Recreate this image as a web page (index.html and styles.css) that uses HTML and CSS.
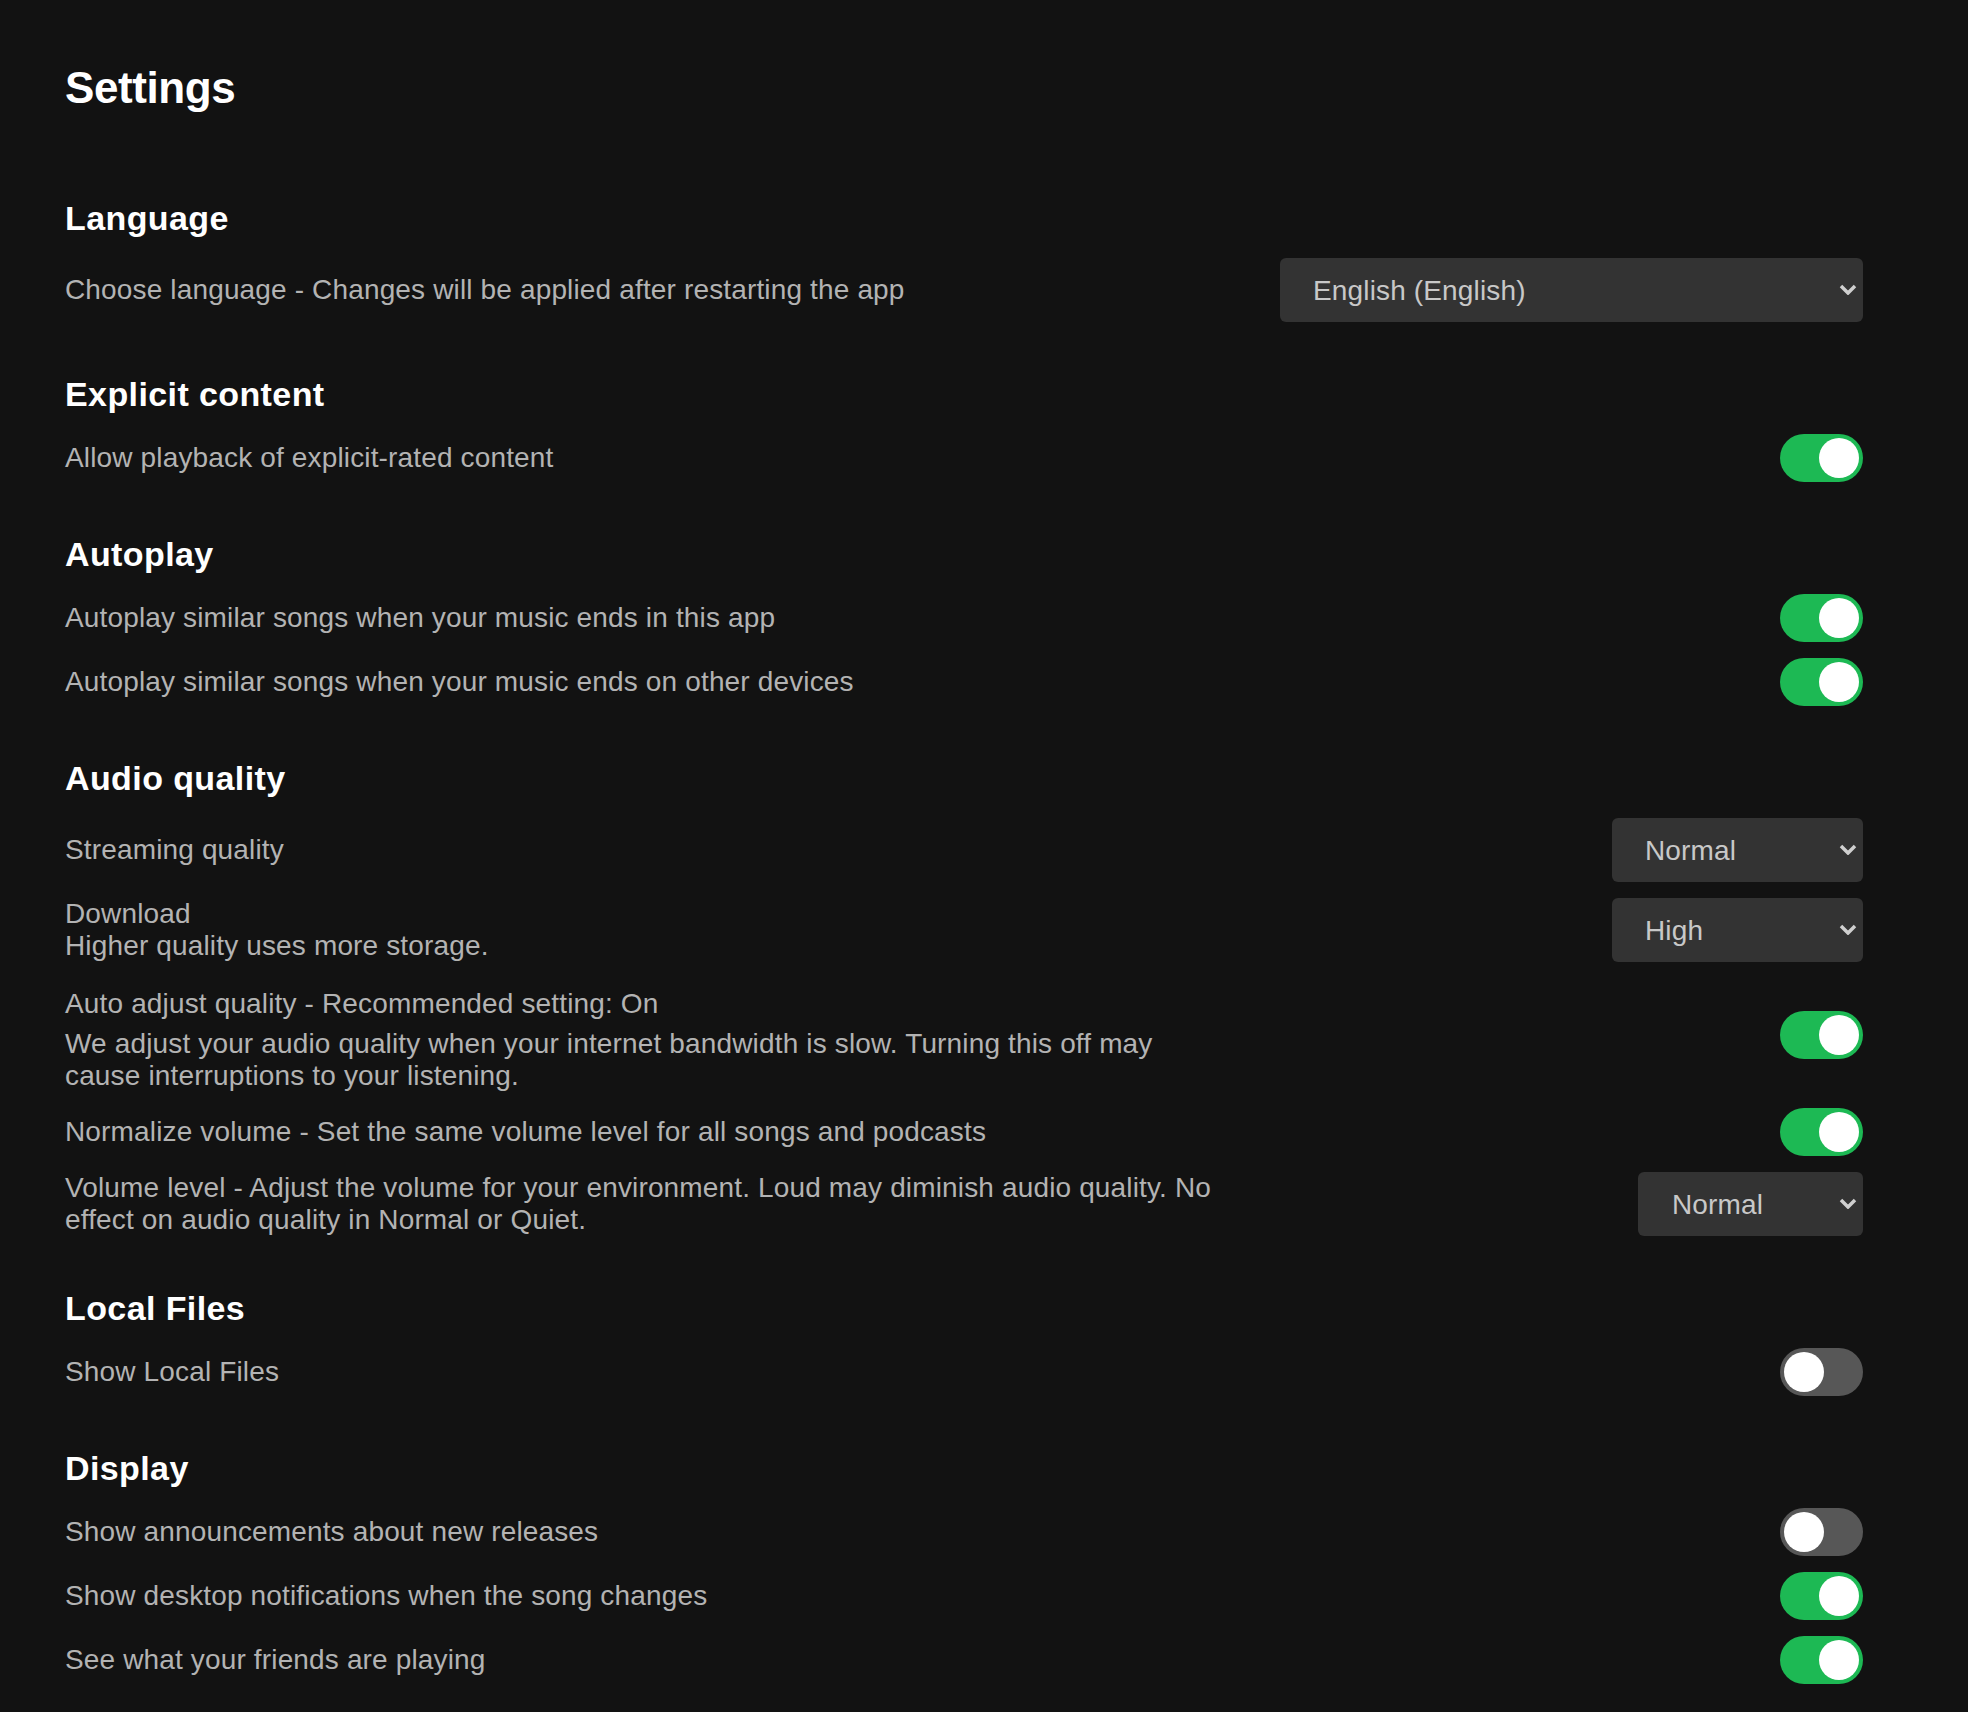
FILE: index.html
```
<!DOCTYPE html>
<html lang="en">
<head>
    <meta charset="UTF-8">
    <meta name="viewport" content="width=device-width, initial-scale=1.0">
    <title>Settings</title>
    <link rel="stylesheet" href="styles.css">
</head>
<body>
    <main class="settings">
        <h1>Settings</h1>

        <section class="group">
            <h2>Language</h2>
            <div class="row">
                <label class="row-label" for="language">Choose language - Changes will be applied after restarting the app</label>
                <div class="select-wrap">
                    <select id="language" class="select select-lang">
                        <option>English (English)</option>
                    </select>
                    <svg class="chevron" viewBox="0 0 18 11"><path d="M2 2l7 7 7-7"/></svg>
                </div>
            </div>
        </section>

        <section class="group">
            <h2>Explicit content</h2>
            <div class="row">
                <label class="row-label">Allow playback of explicit-rated content</label>
                <input type="checkbox" class="switch" checked>
            </div>
        </section>

        <section class="group">
            <h2>Autoplay</h2>
            <div class="row">
                <label class="row-label">Autoplay similar songs when your music ends in this app</label>
                <input type="checkbox" class="switch" checked>
            </div>
            <div class="row">
                <label class="row-label">Autoplay similar songs when your music ends on other devices</label>
                <input type="checkbox" class="switch" checked>
            </div>
        </section>

        <section class="group">
            <h2>Audio quality</h2>
            <div class="row">
                <label class="row-label" for="streaming">Streaming quality</label>
                <div class="select-wrap">
                    <select id="streaming" class="select select-quality">
                        <option>Normal</option>
                    </select>
                    <svg class="chevron" viewBox="0 0 18 11"><path d="M2 2l7 7 7-7"/></svg>
                </div>
            </div>
            <div class="row">
                <label class="row-label" for="download">
                    <span class="line">Download</span>
                    <span class="line">Higher quality uses more storage.</span>
                </label>
                <div class="select-wrap">
                    <select id="download" class="select select-quality">
                        <option>High</option>
                    </select>
                    <svg class="chevron" viewBox="0 0 18 11"><path d="M2 2l7 7 7-7"/></svg>
                </div>
            </div>
            <div class="row">
                <label class="row-label padded">
                    <span class="line label-title">Auto adjust quality - Recommended setting: On</span>
                    <span class="line">We adjust your audio quality when your internet bandwidth is slow. Turning this off may cause interruptions to your listening.</span>
                </label>
                <input type="checkbox" class="switch" checked>
            </div>
            <div class="row">
                <label class="row-label">Normalize volume - Set the same volume level for all songs and podcasts</label>
                <input type="checkbox" class="switch" checked>
            </div>
            <div class="row">
                <label class="row-label" for="volume">Volume level - Adjust the volume for your environment. Loud may diminish audio quality. No effect on audio quality in Normal or Quiet.</label>
                <div class="select-wrap">
                    <select id="volume" class="select select-volume">
                        <option>Normal</option>
                    </select>
                    <svg class="chevron" viewBox="0 0 18 11"><path d="M2 2l7 7 7-7"/></svg>
                </div>
            </div>
        </section>

        <section class="group">
            <h2>Local Files</h2>
            <div class="row">
                <label class="row-label">Show Local Files</label>
                <input type="checkbox" class="switch">
            </div>
        </section>

        <section class="group">
            <h2>Display</h2>
            <div class="row">
                <label class="row-label">Show announcements about new releases</label>
                <input type="checkbox" class="switch">
            </div>
            <div class="row">
                <label class="row-label">Show desktop notifications when the song changes</label>
                <input type="checkbox" class="switch" checked>
            </div>
            <div class="row">
                <label class="row-label">See what your friends are playing</label>
                <input type="checkbox" class="switch" checked>
            </div>
        </section>
    </main>
</body>
</html>
```

FILE: styles.css
```
body {
    margin: 0;
    background-color: #121212;
    font-family: "Liberation Sans", Arial, sans-serif;
    color: #b3b3b3;
}

.settings {
    padding: 60px 105px 40px 65px;
}

.settings h1 {
    margin: 0 0 82px;
    font-size: 44px;
    line-height: 56px;
    font-weight: bold;
    letter-spacing: -0.4px;
    color: #fff;
}

.group + .group {
    margin-top: 52px;
}

.group h2 {
    margin: 0 0 20px;
    font-size: 34px;
    line-height: 40px;
    font-weight: bold;
    letter-spacing: 0.4px;
    color: #fff;
}

.row {
    display: flex;
    align-items: center;
    justify-content: space-between;
    gap: 40px;
    min-height: 48px;
}

.row + .row {
    margin-top: 16px;
}

.row-label {
    max-width: 1160px;
    font-size: 28px;
    line-height: 32px;
    letter-spacing: 0.15px;
    color: #b3b3b3;
}

.row-label .line {
    display: block;
}

.row-label.padded {
    padding-top: 10px;
}

.label-title {
    margin-bottom: 8px;
}

/* dropdowns */
.select-wrap {
    position: relative;
    flex-shrink: 0;
}

.select {
    appearance: none;
    -webkit-appearance: none;
    display: block;
    height: 64px;
    padding: 0 50px 0 33px;
    border: none;
    border-radius: 6px;
    background-color: #333;
    color: #c8c8c8;
    font-family: inherit;
    font-size: 28px;
    letter-spacing: 0.15px;
    outline: none;
}

.select-lang {
    width: 583px;
}

.select-quality {
    width: 251px;
}

.select-volume {
    width: 225px;
    padding-left: 34px;
}

.chevron {
    position: absolute;
    right: 6px;
    top: 26px;
    width: 18px;
    height: 11px;
    pointer-events: none;
}

.chevron path {
    fill: none;
    stroke: #cfcfcf;
    stroke-width: 3.5;
}

/* toggles */
.switch {
    appearance: none;
    -webkit-appearance: none;
    flex-shrink: 0;
    display: block;
    width: 83px;
    height: 48px;
    margin: 0;
    border-radius: 24px;
    background-color: #575757;
    cursor: pointer;
}

.switch::before {
    content: "";
    display: block;
    width: 40px;
    height: 40px;
    margin: 4px;
    border-radius: 50%;
    background-color: #fff;
}

.switch:checked {
    background-color: #1db954;
}

.switch:checked::before {
    margin-left: 39px;
}
```
